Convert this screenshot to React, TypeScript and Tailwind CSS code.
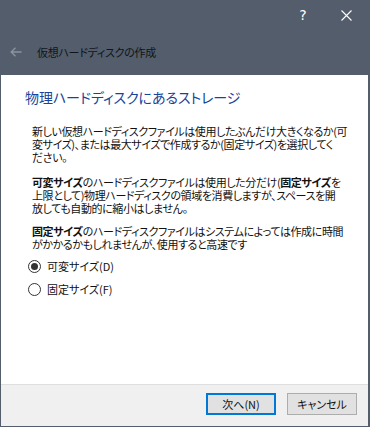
import React from "react";

const font = {
  fontFamily: '"Noto Sans CJK JP", "Noto Sans", sans-serif',
};

function Line({ children }: { children: React.ReactNode }) {
  return <div className="whitespace-nowrap h-[13px] leading-[13px]">{children}</div>;
}

export default function App() {
  return (
    <div
      className="w-[370px] h-[427px] flex flex-col bg-[#535d6b] [font-feature-settings:'palt'] overflow-hidden"
      style={font}
    >
      {/* title bar */}
      <div className="h-[75px] flex flex-col shrink-0">
        <div className="h-[30px] flex items-center justify-end">
          <span className="text-white text-[14px] leading-none w-[14px] text-center mr-[31px]" style={{ fontFamily: '"Segoe UI", "DejaVu Sans", sans-serif' }}>?</span>
          <svg width="11" height="11" viewBox="0 0 11 11" className="mr-[18px]">
            <path d="M0.5 0.5 L10.5 10.5 M10.5 0.5 L0.5 10.5" stroke="#ffffff" strokeWidth="1.1" />
          </svg>
        </div>
        <div className="flex items-center h-[44px] pl-[10px]">
          <svg width="12" height="10" viewBox="0 0 12 10">
            <path d="M5.5 0.8 L1.2 5 L5.5 9.2 M1.2 5 L11.5 5" stroke="#8b939e" strokeWidth="1.4" fill="none" />
          </svg>
          <span className="ml-[15px] text-[11px] tracking-[-0.3px] text-[#111418] leading-none">仮想ハードディスクの作成</span>
        </div>
      </div>

      {/* content */}
      <div className="flex-1 bg-white ml-[1px] mr-[2px] flex flex-col">
        <div className="pl-[24px] pt-[12px] h-[32px] text-[14px] tracking-[-0.1px] leading-[20px] text-[#17449a] whitespace-nowrap">
          物理ハードディスクにあるストレージ
        </div>
        <div className="pl-[31px] mt-[18px] text-[11px] tracking-[-0.4px] text-[#111] flex flex-col">
          <div>
            <Line>新しい仮想ハードディスクファイルは使用したぶんだけ大きくなるか(可</Line>
            <Line>変サイズ)、または最大サイズで作成するか(固定サイズ)を選択してく</Line>
            <Line>ださい。</Line>
          </div>
          <div className="mt-[12px]">
            <Line>
              <b>可変サイズ</b>のハードディスクファイルは使用した分だけ(<b>固定サイズ</b>を
            </Line>
            <Line>上限として)物理ハードディスクの領域を消費しますが、スペースを開</Line>
            <Line>放しても自動的に縮小はしません。</Line>
          </div>
          <div className="mt-[10px]">
            <Line>
              <b>固定サイズ</b>のハードディスクファイルはシステムによっては作成に時間
            </Line>
            <Line>がかかるかもしれませんが、使用すると高速です</Line>
          </div>
        </div>
        <div className="pl-[27px] mt-[5px] flex flex-col gap-[3px] text-[11px] text-[#111]">
          <div className="h-[20px] flex items-center">
            <span className="w-[13px] h-[13px] rounded-full border border-[#333] flex items-center justify-center">
              <span className="w-[7px] h-[7px] rounded-full bg-[#333]" />
            </span>
            <span className="ml-[6px] leading-none">可変サイズ(D)</span>
          </div>
          <div className="h-[20px] flex items-center">
            <span className="w-[13px] h-[13px] rounded-full border border-[#333] bg-white" />
            <span className="ml-[6px] leading-none">固定サイズ(F)</span>
          </div>
        </div>
      </div>

      {/* footer */}
      <div className="h-[42px] shrink-0 ml-[1px] mr-[2px] mb-[1px] bg-[#f0f0f0] border-t border-[#dfdfdf] flex items-start justify-end pt-[8px] pr-[11px] gap-[11px]">
        <button className="w-[70px] h-[22px] bg-[#e1e1e1] border-2 border-[#0078d7] text-[11px] text-[#111] leading-none flex items-center justify-center">
          次へ(N)
        </button>
        <button className="w-[70px] h-[22px] bg-[#e1e1e1] border border-[#adadad] text-[11px] text-[#111] leading-none flex items-center justify-center">
          キャンセル
        </button>
      </div>
    </div>
  );
}
